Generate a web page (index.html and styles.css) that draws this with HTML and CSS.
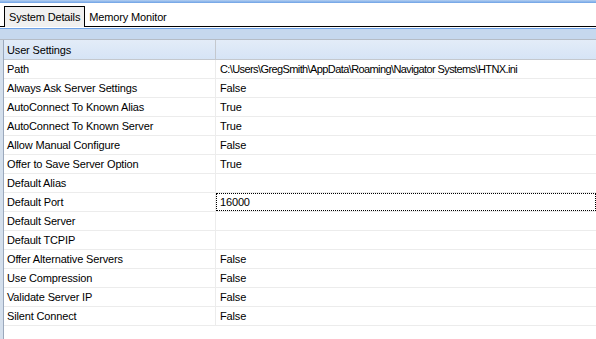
FILE: index.html
```html
<!DOCTYPE html>
<html lang="en">
<head>
    <meta charset="UTF-8">
    <title>System Details</title>
    <link rel="stylesheet" href="styles.css">
</head>
<body>
    <div class="top-line"></div>

    <!-- tabs -->
    <div class="tab-strip">
        <div class="tab active">System Details</div>
        <div class="tab">Memory Monitor</div>
    </div>

    <div class="band"></div>

    <div class="grid">
        <div class="row head">
            <div class="cell name">User Settings</div>
            <div class="cell value"></div>
        </div>
        <div class="row"><div class="cell name">Path</div><div class="cell value path">C:\Users\GregSmith\AppData\Roaming\Navigator Systems\HTNX.ini</div></div>
        <div class="row"><div class="cell name">Always Ask Server Settings</div><div class="cell value">False</div></div>
        <div class="row"><div class="cell name">AutoConnect To Known Alias</div><div class="cell value">True</div></div>
        <div class="row"><div class="cell name">AutoConnect To Known Server</div><div class="cell value">True</div></div>
        <div class="row"><div class="cell name">Allow Manual Configure</div><div class="cell value">False</div></div>
        <div class="row"><div class="cell name">Offer to Save Server Option</div><div class="cell value">True</div></div>
        <div class="row"><div class="cell name">Default Alias</div><div class="cell value"></div></div>
        <div class="row"><div class="cell name">Default Port</div><div class="cell value selected">16000</div></div>
        <div class="row"><div class="cell name">Default Server</div><div class="cell value"></div></div>
        <div class="row"><div class="cell name">Default TCPIP</div><div class="cell value"></div></div>
        <div class="row"><div class="cell name">Offer Alternative Servers</div><div class="cell value">False</div></div>
        <div class="row"><div class="cell name">Use Compression</div><div class="cell value">False</div></div>
        <div class="row"><div class="cell name">Validate Server IP</div><div class="cell value">False</div></div>
        <div class="row"><div class="cell name">Silent Connect</div><div class="cell value">False</div></div>
    </div>
</body>
</html>
```

FILE: styles.css
```css
body {
    margin: 0;
    width: 596px;
    height: 339px;
    overflow: hidden;
    background: #fff;
    font-family: "Liberation Sans", Arial, sans-serif;
    font-size: 11px;
    letter-spacing: -0.15px;
    color: #000;
}
.top-line {
    height: 3px;
    background: linear-gradient(#b4cff0, #6ea2e6);
}
.tab-strip {
    height: 23px;
    display: flex;
    align-items: flex-end;
    padding-left: 4px;
    border-bottom: 1px solid #000;
}
.tab {
    height: 19px;
    line-height: 20px;
    padding: 0 4px;
}
.active {
    background: #f0f0f0;
    border: 1px solid #000;
    border-bottom: none;
    margin-bottom: -1px;
    height: 20px;
}
.band {
    margin-top: 1px;
    height: 10px;
    border-top: 1px solid #6ea2e6;
    background: #c6d8ee;
    border-bottom: 1px solid #b5bcc6;
}
.grid {
    margin-left: 3px;
    border-left: 1px solid #9aa8bc;
    box-shadow: -3px 0 0 #d4dfec;
    height: 300px;
}
.row {
    display: flex;
    height: 18px;
    border-bottom: 1px solid #ececec;
}
.head {
    height: 19px;
    background: linear-gradient(#e3ecf8, #d6e4f6);
    border-bottom-color: #c4c8ce;
}
.cell {
    line-height: 19px;
    white-space: nowrap;
    overflow: hidden;
}
.head .cell {
    line-height: 21px;
}
.name {
    width: 208px;
    padding-left: 3px;
    border-right: 1px solid #ececec;
}
.head .name {
    border-right-color: #c4c8ce;
}
.value {
    flex: 1;
    padding-left: 4px;
}
.path {
    letter-spacing: -0.6px;
}
.selected {
    outline: 1px dotted #000;
    outline-offset: -1px;
}
```
